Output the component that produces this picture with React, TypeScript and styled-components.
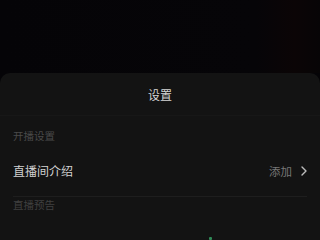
import React from "react";
import styled, { createGlobalStyle } from "styled-components";

const Global = createGlobalStyle`
  html, body {
    margin: 0;
    padding: 0;
    background: #050407;
    font-family: "Noto Sans CJK SC", "Noto Sans", sans-serif;
  }
`;

const Screen = styled.div`
  width: 320px;
  height: 240px;
  overflow: hidden;
  display: flex;
  flex-direction: column;
  background: #050407;
`;

const Backdrop = styled.div`
  height: 73px;
  flex-shrink: 0;
  background: linear-gradient(90deg, #050407 0%, #060508 80%, #0b0506 92%, #070506 100%);
`;

const Sheet = styled.div`
  flex: 1;
  background: #131313;
  border-radius: 10px 10px 0 0;
  display: flex;
  flex-direction: column;
`;

const Header = styled.div`
  height: 42px;
  display: flex;
  align-items: center;
  justify-content: center;
  border-bottom: 1px solid #171717;
  color: #d6d6d6;
  font-size: 12px;
`;

const SectionLabel = styled.div<{ $dim?: boolean }>`
  padding: 0 13px;
  height: ${(p) => (p.$dim ? "12px" : "38px")};
  margin-top: ${(p) => (p.$dim ? "1px" : "0")};
  display: flex;
  align-items: center;
  font-size: 10.5px;
  color: ${(p) => (p.$dim ? "#404040" : "#4a4a4a")};
`;

const Row = styled.div`
  margin: 0 13px;
  height: 43px;
  padding-bottom: 9px;
  box-sizing: border-box;
  display: flex;
  align-items: center;
  justify-content: space-between;
  border-bottom: 1px solid #1e1e1e;
`;

const RowTitle = styled.span`
  color: #d2d2d2;
  font-size: 12px;
`;

const RowAction = styled.span`
  display: flex;
  align-items: center;
  gap: 9px;
  color: #777;
  font-size: 11.5px;
`;

const Footer = styled.div`
  flex: 1;
  display: flex;
  align-items: flex-end;
  justify-content: center;
  padding-left: 100px;
`;

const Dot = styled.span`
  width: 3px;
  height: 3px;
  background: #2f8a57;
  border-radius: 1px;
`;

const Chevron = () => (
  <svg width="6" height="10" viewBox="0 0 6 10">
    <path d="M1 1l4 4-4 4" fill="none" stroke="#bdbdbd" strokeWidth="1.4" strokeLinecap="round" strokeLinejoin="round" />
  </svg>
);

export default function App() {
  return (
    <Screen>
      <Global />
      <Backdrop />
      <Sheet>
        <Header>设置</Header>
        <SectionLabel>开播设置</SectionLabel>
        <Row>
          <RowTitle>直播间介绍</RowTitle>
          <RowAction>
            添加
            <Chevron />
          </RowAction>
        </Row>
        <SectionLabel $dim>直播预告</SectionLabel>
        <Footer>
          <Dot />
        </Footer>
      </Sheet>
    </Screen>
  );
}
